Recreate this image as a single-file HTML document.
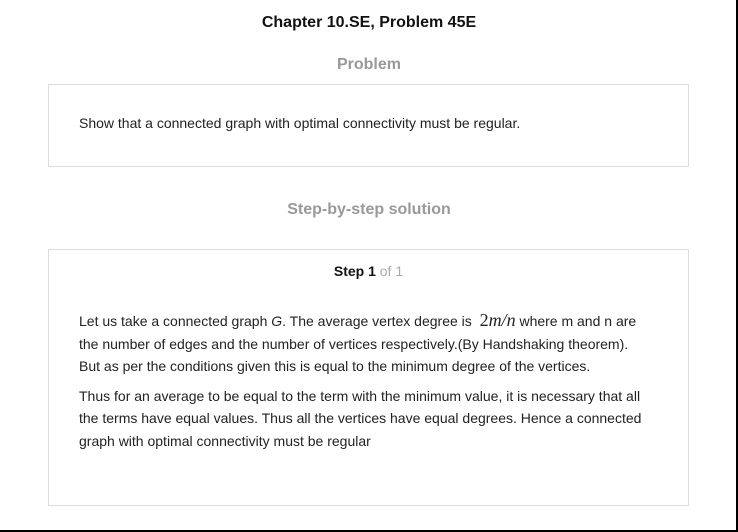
<!DOCTYPE html>
<html><head><meta charset="utf-8"><style>
html,body{margin:0;padding:0}
body{width:738px;height:532px;background:#fff;position:relative;overflow:hidden;font-family:"Liberation Sans",Arial,sans-serif;color:#222}
.frame{position:absolute;left:0;top:0;width:736px;height:530px;border-right:2px solid #000;border-bottom:2px solid #000}
.t{position:absolute;left:0;width:738px;text-align:center;font-weight:bold}
.box{position:absolute;left:48px;width:641px;border:1px solid #ddd;box-sizing:border-box}
p{margin:0;font-size:14px;line-height:22.5px;white-space:nowrap}
.m{font-family:"Liberation Serif",serif;font-style:italic;font-size:18px}
</style></head><body>
<div class="frame"></div>
<div class="t" style="top:14px;font-size:16px;color:#111">Chapter 10.SE, Problem 45E</div>
<div class="t" style="top:56px;font-size:16px;color:#999">Problem</div>
<div class="box" style="top:84px;height:83px">
<p style="position:absolute;left:30px;top:27px">Show that a connected graph with optimal connectivity must be regular.</p>
</div>
<div class="t" style="top:201px;font-size:16px;color:#999">Step-by-step solution</div>
<div class="box" style="top:249px;height:257px">
<div style="position:absolute;left:0;width:639px;top:13px;text-align:center;font-size:14px;font-weight:bold;color:#111">Step 1 <span style="font-weight:normal;color:#aaa">of 1</span></div>
<div style="position:absolute;left:30px;top:59px;width:600px">
<p>Let us take a connected graph <i>G</i>. The average vertex degree is &nbsp;<span class="m"><span style="font-style:normal">2</span>m/n</span>&nbsp;where m and n are<br>the number of edges and the number of vertices respectively.(By Handshaking theorem).<br>But as per the conditions given this is equal to the minimum degree of the vertices.</p>
<p style="margin-top:7px">Thus for an average to be equal to the term with the minimum value, it is necessary that all<br>the terms have equal values. Thus all the vertices have equal degrees. Hence a connected<br>graph with optimal connectivity must be regular</p>
</div>
</div>
</body></html>
